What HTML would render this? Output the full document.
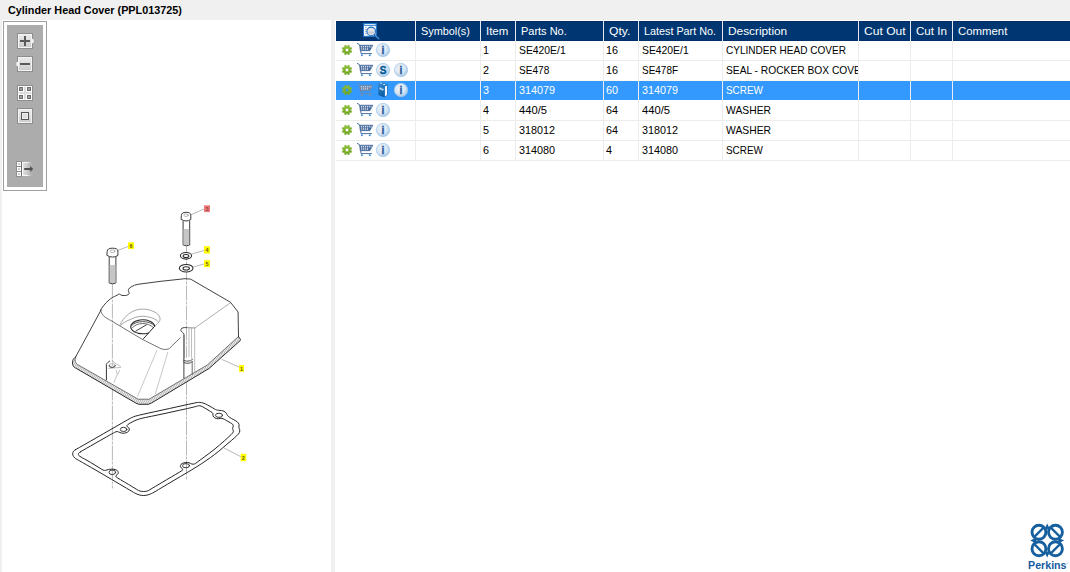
<!DOCTYPE html>
<html>
<head>
<meta charset="utf-8">
<title>Cylinder Head Cover (PPL013725)</title>
<style>
html,body{margin:0;padding:0;}
body{width:1070px;height:572px;overflow:hidden;background:#f0f0f0;position:relative;font-family:"Liberation Sans",sans-serif;}
.abs{position:absolute;}
#title{left:7.8px;top:2px;height:16px;line-height:16px;font-size:11.6px;font-weight:bold;color:#000;white-space:nowrap;transform:scaleX(0.934);transform-origin:0 50%;}
#left{left:2px;top:20px;width:329px;height:552px;background:#fff;}
#right{left:335px;top:20px;width:735px;height:552px;background:#fff;}
#tbar{left:1px;top:1px;width:42px;height:168px;border:1px solid #a0a0a0;background:#fff;}
#tbar .in{position:absolute;left:3px;top:3px;width:36px;height:162px;background:#acacac;}
/* table */
#hdr{left:0;top:1px;width:734px;height:20px;background:#003772;box-shadow:inset 0 1px 0 #002d66,inset 0 -1px 0 #00306a;}
.hc{position:absolute;top:0;height:20px;line-height:20px;font-size:11.5px;color:#fff;white-space:nowrap;}
.vs{position:absolute;top:0;width:1px;height:20px;background:#e4e8ef;}
.row{position:absolute;left:0;width:734px;height:19px;border-bottom:1px solid #ececec;font-size:11px;color:#000;}
.row.sel{background:#3399ff;color:#fff;border-bottom-color:#fff;}
.c{position:absolute;top:0;height:19px;line-height:18px;white-space:nowrap;overflow:hidden;}
.t{display:inline-block;transform-origin:0 50%;}
.ic{position:absolute;top:0;overflow:visible;}
.bv{position:absolute;top:21px;width:1px;height:120px;background:#ececec;}
</style>
</head>
<body>
<div id="title" class="abs">Cylinder Head Cover (PPL013725)</div>

<div id="left" class="abs">
<!--DIAGRAM-->
<svg class="abs" style="left:-2px;top:0" width="331" height="552" viewBox="0 20 331 552" fill="none" stroke-linecap="round" stroke-linejoin="round">
  <defs><pattern id="hatch" width="1.7" height="1.7" patternUnits="userSpaceOnUse" patternTransform="rotate(-28)"><rect width="1.7" height="1.7" fill="#f4f4f4"/><rect width="0.7" height="1.7" fill="#a6a6a6"/></pattern></defs>
  <!-- axis lines -->
  <g stroke="#9a9a9a" stroke-width="0.7" stroke-dasharray="14 2 2 2">
    <path d="M112.4,284 V365.5"/><path d="M112.4,386 V488"/>
    <path d="M186.5,246 V357.5"/><path d="M186.5,381 V481"/>
  </g>
  <!-- bolt 3 -->
  <g stroke="#333" stroke-width="0.95">
    <path d="M183.1,221 V245 Q186.4,246.6 189.7,245 V221" fill="#fff"/>
    <path d="M183.6,229 H189.2 V245 H183.6 Z" fill="#c6c6c6" stroke="none"/>
    <path d="M181.4,215 Q181.4,212.3 186.1,212.3 Q190.8,212.3 190.8,215 V219.5 Q186.1,222.6 181.4,219.5 Z" fill="#fff"/>
    <ellipse cx="186.1" cy="215.2" rx="2.2" ry="1.3" stroke="#888" stroke-width="0.6"/>
    <path d="M191.5,214.5 L204,209" stroke="#888" stroke-width="0.6"/>
  </g>
  <!-- bolt 6 -->
  <g stroke="#333" stroke-width="0.95">
    <path d="M109.2,257 V283 Q112.5,284.6 115.9,283 V257" fill="#fff"/>
    <path d="M109.7,265 H115.4 V283 H109.7 Z" fill="#c6c6c6" stroke="none"/>
    <path d="M107.2,251 Q107.2,248.2 112.5,248.2 Q117.9,248.2 117.9,251 V255.5 Q112.5,258.8 107.2,255.5 Z" fill="#fff"/>
    <ellipse cx="112.5" cy="251.2" rx="2.4" ry="1.4" stroke="#888" stroke-width="0.6"/>
    <path d="M118.5,250.2 L128,246.5" stroke="#888" stroke-width="0.6"/>
  </g>
  <!-- washers -->
  <g stroke="#2a2a2a" stroke-width="1.05" fill="#fff">
    <ellipse cx="186" cy="255.8" rx="5.6" ry="3.3"/>
    <ellipse cx="186" cy="256" rx="2.9" ry="1.5"/>
    <ellipse cx="186.2" cy="268.2" rx="6.8" ry="3.8"/>
    <ellipse cx="186.2" cy="268.4" rx="3.2" ry="1.6"/>
    <path d="M191.8,254 L204,250.5 M193.3,267 L204,264" stroke="#888" stroke-width="0.6" fill="none"/>
  </g>
  <!-- labels -->
  <g stroke="none">
    <rect x="204" y="205.3" width="6" height="6.8" fill="#f07878"/>
    <rect x="204" y="246.2" width="6" height="7.4" fill="#ffff00"/>
    <rect x="204" y="260.2" width="6" height="7" fill="#ffff00"/>
    <rect x="128" y="242.3" width="6" height="6.8" fill="#ffff00"/>
    <rect x="239" y="365" width="5" height="6.8" fill="#ffff00"/>
    <rect x="240.6" y="453.8" width="5.6" height="7.4" fill="#ffff00"/>
  </g>
  <g font-family="Liberation Sans, sans-serif" font-weight="bold" font-size="5.5" fill="#6b5a1e" stroke="none" text-anchor="middle">
    <text x="207" y="210.7" fill="#8a4a4a">3</text>
    <text x="207" y="252">4</text>
    <text x="207" y="265.8">5</text>
    <text x="131" y="247.8">6</text>
    <text x="241.5" y="370.5">1</text>
    <text x="243.4" y="459.6">2</text>
  </g>
  <!-- COVER -->
  <g stroke="#2c2c2c" stroke-width="0.9">
    <!-- flange -->
    <path d="M75.6,357 C72.5,359 71.8,362 73,365.5 C74,367.6 75.5,368 76.8,368.7 L135.7,403 L138.9,404.3 H148.3 L151.5,403 L209,368.5 L240.3,340.5 C240.8,339.3 240.2,338.4 239.3,338 L238.5,336.5 L207.3,365 L149.1,399.2 H138.1 L134.2,396.9 L78.2,364.9 C75.5,363.5 74.3,361 75.6,357 Z" fill="url(#hatch)" stroke="none"/>
    <path d="M238.5,336.5 L207.3,365 L149.1,399.2 H138.1 L134.2,396.9 L78.2,364.9 C75.5,363.5 74.3,361 75.6,357" stroke="#4a4a4a" stroke-width="0.75"/>
    <path d="M75.6,357 C72.5,359 71.8,362 73,365.5 C74,367.6 75.5,368 76.8,368.7 L135.7,403 L138.9,404.3 H148.3 L151.5,403 L209,368.5 L240.3,340.5 C240.8,339.3 240.2,338.4 239.3,338 L238.5,336.5" stroke-width="1"/>
    <!-- silhouette -->
    <path d="M75.6,357 L100.4,311.2 C101.5,307.6 105,303.5 109,300 C111.2,298 114,296.6 116,295.8 C117.5,295 118.5,294 119.5,294.1 C120.6,294.3 121,295.3 122,295.5 L125.7,295.5 C127.6,295 129.6,294.2 129.2,293 C128.8,291.6 128,290.6 128.5,289.5 C129,288.3 130,287.5 131,287 C133,285.6 135.5,284.7 138,284.3 L160,281.4 L185,278.7 L190.6,279.1 L230.4,302.2 L238.1,312 L238.5,336.5"/>
    <!-- top face front edge -->
    <path d="M100.6,309.5 C100.8,312 101.8,314 103.5,315.8 C105.5,317.8 108,319 110.4,320.3 L142.6,339.5 L158,347.2 C160,348.4 162,349.3 164,349.4 C166.5,349.4 168,349.3 169.2,348.6 L180.4,337.7" stroke="#3a3a3a" stroke-width="0.7"/>
    <!-- right boss notch -->
    <path d="M186.5,327.6 L184.6,327.6 C182.5,327.6 180.6,328.6 180.8,330.2 C181,332 183.9,332.5 183.9,334.5 V378" stroke-width="0.9"/>
    <path d="M186.5,327.6 L194.8,328" stroke="#666" stroke-width="0.7"/>
    <path d="M230.4,302.8 L194.8,328" stroke="#777" stroke-width="0.6"/>
    <!-- hole -->
    <path d="M154.7,326.2 L143.3,338.9" stroke-width="1"/>
    <path d="M154.7,326.2 A12,7 0 1 0 148.6,332.9" stroke-width="1.1"/>
    <path d="M131.6,325.6 C134,323 138,321.6 142.6,321.6 C147.5,321.6 151.8,323 154.2,325.4" stroke-width="0.8"/>
    <path d="M132.4,327.6 C135,325 138.5,323.5 142.6,323.5 C147,323.5 150.8,325 153.4,327.6" stroke-width="0.7"/>
    <path d="M135.8,331.1 L146.4,324.8" stroke-width="0.9"/>
  </g>
  <g stroke="#777" stroke-width="0.65">
    <!-- recess arcs -->
    <path d="M120.1,324.6 C122,320.6 124.8,317 128.4,314.2 C131.4,311.8 134.8,310.1 138.6,309.4 C141.2,309 143.8,309 146.4,309.3 C149.4,309.7 152,310.6 154.3,311.8 C157,313.2 159.2,315 159.8,317.3 C160.2,318.5 160.2,319.4 159.8,320.4 C159,322.4 157.2,324.2 155.1,325.9"/>
    <path d="M120.6,325.3 C123.6,322.6 126.8,320.8 130.7,319.3 C133.2,318.3 135.8,317 138.6,316.5 C141.2,316.2 143.8,316.2 146.4,316.5 C149.2,316.9 151.9,317.7 154.3,318.9 C156,319.7 157.3,320.6 158.2,321.6"/>
    <!-- front face light lines -->
    <path d="M156.8,350.6 L137.6,396.2" stroke="#a8a8a8"/>
    <path d="M167.8,352.4 L155.4,393.6" stroke="#a8a8a8"/>
    <!-- left boss -->
    <path d="M112.8,361.7 L120.3,366.2 M120.6,367.4 L108.7,368.4" stroke="#9a9a9a"/>
    <path d="M119.7,370.2 L117.5,375 M116.2,370.2 L117.2,374 M116.9,375.3 L114,382.5" stroke="#a6a6a6"/>
    <!-- right boss light lines -->
    <path d="M189,328 V356.5 M191.5,328.2 V356 C191.6,357.6 192,358.4 192.2,359.4 M194.7,328.2 V372.3" stroke="#999"/>
  </g>
  <g stroke="#2c2c2c" stroke-width="0.8">
    <path d="M106.4,379.8 V364.4 C107,363 108.4,362 109.7,361.1" stroke-width="0.95"/>
    <ellipse cx="112.2" cy="365.5" rx="3.1" ry="1.9" stroke="#8a8a8a" stroke-width="0.6"/>
    <path d="M109.1,365.5 A3.1,1.9 0 0 0 115.3,365.5" stroke="#333" stroke-width="0.9"/>
    <path d="M184.3,335 V357.8" stroke="#555" stroke-width="0.5"/>
    <path d="M183.6,360.2 C185,361.6 191,361.6 192.2,359.6 M183.6,362.2 C185,363.8 191,363.8 192.2,361.6" stroke="#333" stroke-width="0.9"/>
    <path d="M192.2,361.6 V374.2" stroke="#444" stroke-width="0.8"/>
    <path d="M222,359.5 L238.8,367" stroke="#888" stroke-width="0.6"/>
  </g>
  <!-- GASKET -->
  <g stroke="#262626" stroke-width="1">
    <path d="M75.3,449.8 Q76.2,449.3 90.1,441.4 Q104.0,433.4 117.0,425.9 Q130.0,418.4 131.7,417.6 Q133.4,416.8 135.2,416.2 Q137.0,415.7 138.3,415.4 Q139.7,415.0 154.8,411.7 Q170.0,408.4 183.0,405.5 Q196.0,402.7 197.2,402.5 Q198.5,402.3 199.9,402.4 Q201.3,402.5 203.2,403.1 Q205.2,403.6 207.6,405.0 Q210.0,406.3 212.2,407.6 Q214.5,409.0 215.3,409.4 Q216.2,409.9 217.4,410.1 Q218.6,410.3 220.1,410.4 Q221.5,410.4 222.8,410.8 Q224.1,411.1 225.2,412.1 Q226.4,413.1 227.0,414.5 Q227.6,415.8 228.6,416.6 Q229.6,417.4 231.3,418.4 Q233.0,419.3 235.2,420.5 Q237.5,421.7 238.4,423.1 Q239.4,424.5 239.0,425.9 Q238.6,427.2 239.2,428.4 Q239.8,429.6 239.8,431.0 Q239.8,432.3 238.4,434.0 Q237.0,435.6 234.5,437.8 Q232.0,440.0 227.0,444.2 Q222.0,448.5 218.4,451.5 Q214.8,454.5 210.4,457.6 Q206.0,460.7 201.8,463.5 Q197.5,466.3 191.8,469.8 Q186.0,473.2 180.8,476.3 Q175.5,479.4 167.8,484.0 Q160.0,488.6 156.8,490.6 Q153.5,492.5 152.5,493.1 Q151.5,493.6 149.9,494.2 Q148.3,494.9 145.9,495.3 Q143.6,495.7 141.8,495.4 Q139.9,495.2 137.8,494.4 Q135.7,493.6 134.3,492.8 Q133.0,492.0 126.7,488.3 Q120.4,484.6 111.6,479.4 Q102.8,474.2 91.4,467.6 Q80.0,461.1 78.2,460.1 Q76.5,459.1 75.7,458.6 Q74.8,458.1 73.7,456.7 Q72.6,455.3 72.7,453.8 Q72.7,452.2 73.6,451.2 Q74.5,450.3 75.3,449.8Z"/>
    <path d="M80.3,451.9 Q81.1,451.4 90.5,446.0 Q100.0,440.6 106.5,436.9 Q113.0,433.2 114.5,432.4 Q116.0,431.5 117.3,431.6 Q118.6,431.8 119.9,432.5 Q121.2,433.1 122.8,433.2 Q124.4,433.4 126.2,432.7 Q128.0,432.0 128.8,431.0 Q129.6,430.0 129.3,428.9 Q129.1,427.9 127.8,427.1 Q126.5,426.3 127.0,425.5 Q127.5,424.7 129.2,423.6 Q131.0,422.6 132.9,421.6 Q134.9,420.5 137.2,419.7 Q139.5,418.9 142.2,418.2 Q144.8,417.6 151.3,416.3 Q157.8,415.0 168.9,412.6 Q180.0,410.1 187.5,408.5 Q195.0,406.8 196.2,406.4 Q197.5,406.0 198.6,405.8 Q199.7,405.6 200.9,406.0 Q202.1,406.4 204.6,407.9 Q207.0,409.3 209.0,410.6 Q211.0,411.8 212.1,412.5 Q213.1,413.1 212.9,414.5 Q212.7,415.8 213.7,417.0 Q214.7,418.2 216.6,418.6 Q218.6,419.0 220.1,418.4 Q221.7,417.8 224.3,419.3 Q227.0,420.8 229.0,422.0 Q231.0,423.1 231.8,423.6 Q232.7,424.1 233.1,425.1 Q233.5,426.1 232.9,427.2 Q232.3,428.4 232.9,429.6 Q233.5,430.8 233.3,431.8 Q233.1,432.7 231.1,434.6 Q229.0,436.6 227.2,438.3 Q225.3,440.0 219.6,445.0 Q213.8,450.0 208.9,453.6 Q204.0,457.2 200.2,460.0 Q196.5,462.8 195.4,463.5 Q194.4,464.2 193.1,464.2 Q191.8,464.2 190.4,463.4 Q189.1,462.6 187.6,462.5 Q186.0,462.3 183.9,462.9 Q181.8,463.4 181.0,464.4 Q180.2,465.5 180.4,466.6 Q180.7,467.6 181.9,468.4 Q183.1,469.2 182.9,469.7 Q182.8,470.2 179.4,472.2 Q176.0,474.2 171.6,476.8 Q167.1,479.4 161.1,483.0 Q155.0,486.6 152.2,488.3 Q149.5,490.0 148.4,490.6 Q147.3,491.2 145.4,491.4 Q143.6,491.6 141.8,491.4 Q139.9,491.2 138.4,490.4 Q137.0,489.6 132.9,487.1 Q128.8,484.6 124.4,482.0 Q120.0,479.4 117.8,478.1 Q115.7,476.8 115.7,476.2 Q115.7,475.7 117.0,474.8 Q118.3,473.9 118.3,472.6 Q118.3,471.3 116.8,470.2 Q115.2,469.2 113.1,469.2 Q111.0,469.2 109.7,469.3 Q108.4,469.4 107.1,469.9 Q105.7,470.5 104.4,470.4 Q103.1,470.2 101.5,469.2 Q100.0,468.2 95.0,465.1 Q90.0,462.1 87.0,460.4 Q84.0,458.7 82.5,457.9 Q81.1,457.0 79.8,456.3 Q78.6,455.6 78.4,454.6 Q78.3,453.5 78.9,452.9 Q79.5,452.3 80.3,451.9Z"/>
    <ellipse cx="123.6" cy="429.4" rx="3.3" ry="2.1" stroke-width="0.9"/>
    <ellipse cx="112.3" cy="472.3" rx="3.3" ry="2.3" stroke-width="0.9"/>
    <ellipse cx="219" cy="415.3" rx="3.5" ry="2.1" stroke-width="0.9"/>
    <ellipse cx="186" cy="465.7" rx="3.5" ry="2.1" stroke-width="0.9"/>
    <path d="M224,447.9 L240.4,456.5" stroke="#888" stroke-width="0.6"/>
  </g>
</svg>
<!--/DIAGRAM-->
  <div id="tbar" class="abs"><div class="in"></div>
<!--TB-->
<svg class="abs" style="left:3px;top:3px" width="36" height="162" viewBox="7 25 36 162">
  <defs>
    <linearGradient id="bg1" x1="0" y1="0" x2="0" y2="1"><stop offset="0" stop-color="#e9e9e9"/><stop offset="0.5" stop-color="#dcdcdc"/><stop offset="1" stop-color="#cdcdcd"/></linearGradient>
    <linearGradient id="bg2" x1="0" y1="0" x2="1" y2="0"><stop offset="0" stop-color="#e6e6e6"/><stop offset="0.45" stop-color="#c9c9c9"/><stop offset="1" stop-color="#acacac" stop-opacity="0"/></linearGradient>
    <linearGradient id="bg3" x1="0" y1="0" x2="1" y2="0"><stop offset="0" stop-color="#ffffff"/><stop offset="0.5" stop-color="#f4f4f4"/><stop offset="1" stop-color="#acacac" stop-opacity="0"/></linearGradient>
  </defs>
  <!-- plus -->
  <path d="M33,38.2 L35.2,41 L33,43.8 Z" fill="#f4f4f4" stroke="#8c8c8c" stroke-width="0.8"/>
  <rect x="17.5" y="33.5" width="15" height="15" fill="#f3f3f3" stroke="#8d8d8d" stroke-width="1"/>
  <rect x="19" y="35" width="12" height="12" fill="url(#bg1)"/>
  <rect x="32" y="38.8" width="1.4" height="4.4" fill="#f4f4f4"/>
  <rect x="20" y="40" width="10" height="2" fill="#5a5a5a"/><rect x="24" y="36" width="2" height="10" fill="#5a5a5a"/>
  <!-- minus -->
  <path d="M17,61.2 L14.8,64 L17,66.8 Z" fill="#f4f4f4" stroke="#8c8c8c" stroke-width="0.8"/>
  <rect x="17.5" y="56.5" width="15" height="15" fill="#f3f3f3" stroke="#8d8d8d" stroke-width="1"/>
  <rect x="19" y="58" width="12" height="12" fill="url(#bg1)"/>
  <rect x="16.6" y="61.8" width="1.4" height="4.4" fill="#f4f4f4"/>
  <rect x="20" y="63" width="10" height="2" fill="#5a5a5a"/>
  <!-- grid -->
  <rect x="17.5" y="85.5" width="15" height="15" fill="#f3f3f3" stroke="#8d8d8d" stroke-width="1"/>
  <rect x="19" y="87" width="12" height="12" fill="#dcdcdc"/>
  <g fill="#a0a0a0" stroke="#6e6e6e" stroke-width="1">
    <rect x="19.5" y="87.5" width="3" height="3"/><rect x="27.5" y="87.5" width="3" height="3"/>
    <rect x="19.5" y="95.5" width="3" height="3"/><rect x="27.5" y="95.5" width="3" height="3"/>
  </g>
  <g fill="none" stroke="#fff" stroke-width="1">
    <rect x="18.5" y="86.5" width="5" height="5"/><rect x="26.5" y="86.5" width="5" height="5"/>
    <rect x="18.5" y="94.5" width="5" height="5"/><rect x="26.5" y="94.5" width="5" height="5"/>
  </g>
  <!-- square -->
  <rect x="17.5" y="108.5" width="15" height="15" fill="#f3f3f3" stroke="#8d8d8d" stroke-width="1"/>
  <rect x="19" y="110" width="12" height="12" fill="url(#bg1)"/>
  <rect x="21.5" y="112.5" width="7" height="7" fill="#dedede" stroke="#555" stroke-width="1"/>
  <rect x="22.5" y="113.5" width="5" height="5" fill="none" stroke="#ececec" stroke-width="1"/>
  <!-- export -->
  <rect x="22" y="162" width="12" height="14" fill="url(#bg2)"/>
  <rect x="22" y="162" width="11" height="1" fill="url(#bg3)"/><rect x="22" y="175" width="11" height="1" fill="url(#bg3)"/>
  <rect x="22" y="162" width="1" height="14" fill="#fff"/>
  <rect x="16.5" y="161.5" width="5" height="15" fill="#fff" stroke="#8f8f8f" stroke-width="1"/>
  <rect x="21" y="162" width="1" height="14" fill="#6c6c6c"/>
  <rect x="17" y="166" width="4" height="1" fill="#8a8a8a"/><rect x="17" y="171" width="4" height="1" fill="#8a8a8a"/>
  <rect x="18" y="163" width="2" height="2" fill="#cfcfcf"/><rect x="18" y="168" width="2" height="2" fill="#cfcfcf"/><rect x="18" y="173" width="2" height="2" fill="#cfcfcf"/>
  <path d="M24.2,168 H30.2 V166 L33.2,169 L30.2,172 V170 H24.2 Z" fill="#505050"/>
</svg>
<!--/TB-->
</div>
</div>

<div id="right" class="abs">
<div id="tbl" class="abs" style="left:1px;top:0;width:734px;height:552px">
  <div id="hdr" class="abs">
<!--HI--><svg class="ic" style="left:0" width="79" height="20" viewBox="336 21 79 20">
  <rect x="363.5" y="23.7" width="12.8" height="12.6" fill="#fdfdfe" stroke="#1d74cc" stroke-width="1"/>
  <rect x="363" y="23.2" width="13.8" height="2.6" fill="#1d74cc"/>
  <rect x="364.4" y="24" width="11.2" height="0.9" fill="#e8f1fb"/>
  <path d="M365.4,27.6 h1 M365.4,29.6 h1 M365.4,31.6 h1 M365.4,33.6 h1" stroke="#1d4f94" stroke-width="0.8"/>
  <path d="M374.6,34.9 L378.7,38.7" stroke="#1c5fae" stroke-width="2.1" stroke-linecap="round"/>
  <path d="M375.2,35.3 L378.5,38.4" stroke="#7fb1e6" stroke-width="0.7" stroke-linecap="round" stroke-dasharray="0.7 0.7"/>
  <circle cx="371.2" cy="31.4" r="4.3" fill="#d6dade" stroke="#1f6fc4" stroke-width="1.1"/>
  <path d="M368.4,30.3 Q371.2,28.2 374,30.3" stroke="#f4f6f8" stroke-width="1" fill="none"/>
  <path d="M368.2,32.6 H374.2" stroke="#c3c8ce" stroke-width="0.9"/>
</svg>
<!--/HI-->
    <div class="hc" style="left:84.6px"><span class="t" style="transform:scaleX(0.944)">Symbol(s)</span></div>
    <div class="hc" style="left:149.8px"><span class="t" style="transform:scaleX(0.997)">Item</span></div>
    <div class="hc" style="left:185.4px"><span class="t" style="transform:scaleX(0.954)">Parts No.</span></div>
    <div class="hc" style="left:273.1px"><span class="t" style="transform:scaleX(1.053)">Qty.</span></div>
    <div class="hc" style="left:308.2px"><span class="t" style="transform:scaleX(0.938)">Latest Part No.</span></div>
    <div class="hc" style="left:391.9px"><span class="t" style="transform:scaleX(1.029)">Description</span></div>
    <div class="hc" style="left:528.0px"><span class="t" style="transform:scaleX(1.050)">Cut Out</span></div>
    <div class="hc" style="left:580.1px"><span class="t" style="transform:scaleX(1.007)">Cut In</span></div>
    <div class="hc" style="left:622.2px"><span class="t" style="transform:scaleX(0.989)">Comment</span></div>
    <div class="vs" style="left:79px"></div><div class="vs" style="left:144px"></div><div class="vs" style="left:179px"></div>
    <div class="vs" style="left:267px"></div><div class="vs" style="left:302px"></div><div class="vs" style="left:386px"></div>
    <div class="vs" style="left:522px"></div><div class="vs" style="left:574px"></div><div class="vs" style="left:616px"></div>
  </div>
  <div class="row" style="top:21px"><!--ICONS1--><svg class="ic" style="left:0" width="79" height="19" viewBox="0 0 79 19"><defs>
<linearGradient id="gg1" x1="0" y1="0" x2="0" y2="1"><stop offset="0" stop-color="#8ec13c"/><stop offset="1" stop-color="#6b9f1f"/></linearGradient>
<radialGradient id="ib1" cx="0.42" cy="0.4" r="0.62"><stop offset="0" stop-color="#eef4fa"/><stop offset="0.6" stop-color="#d9e7f4"/><stop offset="1" stop-color="#9fc4e4"/></radialGradient>
</defs><path d="M11.59,5.30 L12.12,4.13 L13.65,4.76 L13.20,5.97 L14.03,6.80 L15.24,6.35 L15.87,7.88 L14.70,8.41 L14.70,9.59 L15.87,10.12 L15.24,11.65 L14.03,11.20 L13.20,12.03 L13.65,13.24 L12.12,13.87 L11.59,12.70 L10.41,12.70 L9.88,13.87 L8.35,13.24 L8.80,12.03 L7.97,11.20 L6.76,11.65 L6.13,10.12 L7.30,9.59 L7.30,8.41 L6.13,7.88 L6.76,6.35 L7.97,6.80 L8.80,5.97 L8.35,4.76 L9.88,4.13 L10.41,5.30Z M9.25,9.00 a1.75,1.75 0 1,0 3.50,0 a1.75,1.75 0 1,0 -3.50,0Z" fill="url(#gg1)" fill-rule="evenodd" stroke="#7db02e" stroke-width="0.5" stroke-linejoin="round"/><g fill="none" stroke="#44699b" stroke-linecap="round" stroke-linejoin="round"><path d="M21.3,2.5 L22.6,2.9 L24.3,5.2 L25.0,12.6 H35.6" stroke-width="0.95"/><path d="M23.8,4.2 H36.9 L33.9,9.7 H24.6 Z" fill="#44699b" stroke-width="0.6"/></g><g fill="#ffffff"><rect x="25.15" y="5.20" width="1.1" height="1.15"/><rect x="25.25" y="7.35" width="1.1" height="1.25"/><rect x="27.05" y="5.20" width="1.1" height="1.15"/><rect x="27.15" y="7.35" width="1.1" height="1.25"/><rect x="28.95" y="5.20" width="1.1" height="1.15"/><rect x="29.05" y="7.35" width="1.1" height="1.25"/><rect x="30.85" y="5.20" width="1.1" height="1.15"/><rect x="30.95" y="7.35" width="1.1" height="1.25"/><rect x="32.75" y="5.20" width="1.1" height="1.15"/><rect x="24.90" y="5.30" width="0.5" height="1.2"/><rect x="34.60" y="5.30" width="0.9" height="1.1"/></g><circle cx="25.9" cy="14.3" r="1.0" fill="#3b90e3"/><circle cx="33.8" cy="14.3" r="1.0" fill="#3b90e3"/><circle cx="47" cy="9" r="6.7" fill="url(#ib1)" stroke="#a9c9e6" stroke-width="0.7"/><text x="47" y="12.8" text-anchor="middle" font-family="Liberation Sans, sans-serif" font-weight="bold" font-size="10.2" fill="#2e5c9f" stroke="#2e5c9f" stroke-width="0.45">i</text></svg><!--/ICONS1--><div class="c" style="left:147.0px"><span class="t" style="transform:scaleX(0.98)">1</span></div><div class="c" style="left:183.0px"><span class="t" style="transform:scaleX(0.942)">SE420E/1</span></div><div class="c" style="left:270.3px"><span class="t" style="transform:scaleX(0.98)">16</span></div><div class="c" style="left:306.0px"><span class="t" style="transform:scaleX(0.942)">SE420E/1</span></div><div class="c" style="left:390.3px;width:131.5px"><span class="t" style="transform:scaleX(0.913)">CYLINDER HEAD COVER</span></div></div>
  <div class="row" style="top:41px;border-bottom-color:#fbf8f0"><!--ICONS2--><svg class="ic" style="left:0" width="79" height="19" viewBox="0 0 79 19"><defs>
<linearGradient id="gg2" x1="0" y1="0" x2="0" y2="1"><stop offset="0" stop-color="#8ec13c"/><stop offset="1" stop-color="#6b9f1f"/></linearGradient>
<radialGradient id="ib2" cx="0.42" cy="0.4" r="0.62"><stop offset="0" stop-color="#eef4fa"/><stop offset="0.6" stop-color="#d9e7f4"/><stop offset="1" stop-color="#9fc4e4"/></radialGradient>
</defs><path d="M11.59,5.30 L12.12,4.13 L13.65,4.76 L13.20,5.97 L14.03,6.80 L15.24,6.35 L15.87,7.88 L14.70,8.41 L14.70,9.59 L15.87,10.12 L15.24,11.65 L14.03,11.20 L13.20,12.03 L13.65,13.24 L12.12,13.87 L11.59,12.70 L10.41,12.70 L9.88,13.87 L8.35,13.24 L8.80,12.03 L7.97,11.20 L6.76,11.65 L6.13,10.12 L7.30,9.59 L7.30,8.41 L6.13,7.88 L6.76,6.35 L7.97,6.80 L8.80,5.97 L8.35,4.76 L9.88,4.13 L10.41,5.30Z M9.25,9.00 a1.75,1.75 0 1,0 3.50,0 a1.75,1.75 0 1,0 -3.50,0Z" fill="url(#gg2)" fill-rule="evenodd" stroke="#7db02e" stroke-width="0.5" stroke-linejoin="round"/><g fill="none" stroke="#44699b" stroke-linecap="round" stroke-linejoin="round"><path d="M21.3,2.5 L22.6,2.9 L24.3,5.2 L25.0,12.6 H35.6" stroke-width="0.95"/><path d="M23.8,4.2 H36.9 L33.9,9.7 H24.6 Z" fill="#44699b" stroke-width="0.6"/></g><g fill="#ffffff"><rect x="25.15" y="5.20" width="1.1" height="1.15"/><rect x="25.25" y="7.35" width="1.1" height="1.25"/><rect x="27.05" y="5.20" width="1.1" height="1.15"/><rect x="27.15" y="7.35" width="1.1" height="1.25"/><rect x="28.95" y="5.20" width="1.1" height="1.15"/><rect x="29.05" y="7.35" width="1.1" height="1.25"/><rect x="30.85" y="5.20" width="1.1" height="1.15"/><rect x="30.95" y="7.35" width="1.1" height="1.25"/><rect x="32.75" y="5.20" width="1.1" height="1.15"/><rect x="24.90" y="5.30" width="0.5" height="1.2"/><rect x="34.60" y="5.30" width="0.9" height="1.1"/></g><circle cx="25.9" cy="14.3" r="1.0" fill="#3b90e3"/><circle cx="33.8" cy="14.3" r="1.0" fill="#3b90e3"/><circle cx="47" cy="9" r="6.7" fill="url(#ib2)" stroke="#a9c9e6" stroke-width="0.7"/><text x="47" y="12.6" text-anchor="middle" font-family="Liberation Sans, sans-serif" font-weight="bold" font-size="10" fill="#0b5b98" stroke="#0b5b98" stroke-width="0.45">S</text><circle cx="65" cy="9" r="6.7" fill="url(#ib2)" stroke="#a9c9e6" stroke-width="0.7"/><text x="65" y="12.8" text-anchor="middle" font-family="Liberation Sans, sans-serif" font-weight="bold" font-size="10.2" fill="#2e5c9f" stroke="#2e5c9f" stroke-width="0.45">i</text></svg><!--/ICONS2--><div class="c" style="left:147.0px"><span class="t" style="transform:scaleX(0.98)">2</span></div><div class="c" style="left:183.0px"><span class="t" style="transform:scaleX(0.917)">SE478</span></div><div class="c" style="left:270.3px"><span class="t" style="transform:scaleX(0.98)">16</span></div><div class="c" style="left:306.0px"><span class="t" style="transform:scaleX(0.906)">SE478F</span></div><div class="c" style="left:390.3px;width:131.5px"><span class="t" style="transform:scaleX(0.93)">SEAL - ROCKER BOX COVER</span></div></div>
  <div class="row sel" style="top:61px"><!--ICONS3--><svg class="ic" style="left:0" width="79" height="19" viewBox="0 0 79 19"><defs>
<linearGradient id="gg3" x1="0" y1="0" x2="0" y2="1"><stop offset="0" stop-color="#8ec13c"/><stop offset="1" stop-color="#6b9f1f"/></linearGradient>
<radialGradient id="ib3" cx="0.42" cy="0.4" r="0.62"><stop offset="0" stop-color="#eef4fa"/><stop offset="0.6" stop-color="#d9e7f4"/><stop offset="1" stop-color="#9fc4e4"/></radialGradient>
<linearGradient id="bk" x1="0" y1="0" x2="0.3" y2="1"><stop offset="0" stop-color="#3a8bd0"/><stop offset="0.5" stop-color="#1e72b8"/><stop offset="1" stop-color="#0c5fa3"/></linearGradient></defs><path d="M11.59,5.30 L12.12,4.13 L13.65,4.76 L13.20,5.97 L14.03,6.80 L15.24,6.35 L15.87,7.88 L14.70,8.41 L14.70,9.59 L15.87,10.12 L15.24,11.65 L14.03,11.20 L13.20,12.03 L13.65,13.24 L12.12,13.87 L11.59,12.70 L10.41,12.70 L9.88,13.87 L8.35,13.24 L8.80,12.03 L7.97,11.20 L6.76,11.65 L6.13,10.12 L7.30,9.59 L7.30,8.41 L6.13,7.88 L6.76,6.35 L7.97,6.80 L8.80,5.97 L8.35,4.76 L9.88,4.13 L10.41,5.30Z M9.25,9.00 a1.75,1.75 0 1,0 3.50,0 a1.75,1.75 0 1,0 -3.50,0Z" fill="url(#gg3)" fill-rule="evenodd" stroke="#7db02e" stroke-width="0.5" stroke-linejoin="round"/><g fill="none" stroke="#6f87a8" stroke-linecap="round" stroke-linejoin="round"><path d="M21.3,2.5 L22.6,2.9 L24.3,5.2 L25.0,12.6 H35.6" stroke-width="0.95"/><path d="M23.8,4.2 H36.9 L33.9,9.7 H24.6 Z" fill="#6f87a8" stroke-width="0.6"/></g><g fill="#cfe0f3"><rect x="25.15" y="5.20" width="1.1" height="1.15"/><rect x="25.25" y="7.35" width="1.1" height="1.25"/><rect x="27.05" y="5.20" width="1.1" height="1.15"/><rect x="27.15" y="7.35" width="1.1" height="1.25"/><rect x="28.95" y="5.20" width="1.1" height="1.15"/><rect x="29.05" y="7.35" width="1.1" height="1.25"/><rect x="30.85" y="5.20" width="1.1" height="1.15"/><rect x="30.95" y="7.35" width="1.1" height="1.25"/><rect x="32.75" y="5.20" width="1.1" height="1.15"/><rect x="24.90" y="5.30" width="0.5" height="1.2"/><rect x="34.60" y="5.30" width="0.9" height="1.1"/></g><circle cx="25.9" cy="14.3" r="1.0" fill="#8091a8"/><circle cx="33.8" cy="14.3" r="1.0" fill="#8091a8"/><polygon points="45.3,1.0 51.9,3.7 51.9,13.8 48.7,16.6 48.7,5.2" fill="#1a6cb0"/><polygon points="48.9,5.4 51.1,4.3 51.1,13.9 48.9,15.5" fill="#f4f8fc"/><polygon points="42.2,2.2 45.3,1.0 51.9,3.7 48.7,5.2" fill="#1f78c4"/><polygon points="43.6,2.0 45.2,1.4 46.8,2.1 45.2,2.8" fill="#eef5fb"/><polygon points="46.6,3.3 48.2,2.7 49.8,3.4 48.2,4.1" fill="#eef5fb"/><polygon points="42.2,2.2 48.7,5.2 48.7,16.6 42.2,14.0" fill="url(#bk)"/><ellipse cx="44.6" cy="7.6" rx="1.3" ry="1.1" fill="#cfe2f3" opacity="0.9"/><ellipse cx="46.5" cy="8.6" rx="1.3" ry="1.1" fill="#cfe2f3" opacity="0.85"/><circle cx="65" cy="9" r="6.7" fill="url(#ib3)" stroke="#a9c9e6" stroke-width="0.7"/><text x="65" y="12.8" text-anchor="middle" font-family="Liberation Sans, sans-serif" font-weight="bold" font-size="10.2" fill="#2e5c9f" stroke="#2e5c9f" stroke-width="0.45">i</text></svg><!--/ICONS3--><div class="c" style="left:147.0px"><span class="t" style="transform:scaleX(0.98)">3</span></div><div class="c" style="left:183.0px"><span class="t" style="transform:scaleX(0.98)">314079</span></div><div class="c" style="left:270.3px"><span class="t" style="transform:scaleX(0.98)">60</span></div><div class="c" style="left:306.0px"><span class="t" style="transform:scaleX(0.98)">314079</span></div><div class="c" style="left:390.3px;width:131.5px"><span class="t" style="transform:scaleX(0.9)">SCREW</span></div></div>
  <div class="row" style="top:81px"><!--ICONS4--><svg class="ic" style="left:0" width="79" height="19" viewBox="0 0 79 19"><defs>
<linearGradient id="gg4" x1="0" y1="0" x2="0" y2="1"><stop offset="0" stop-color="#8ec13c"/><stop offset="1" stop-color="#6b9f1f"/></linearGradient>
<radialGradient id="ib4" cx="0.42" cy="0.4" r="0.62"><stop offset="0" stop-color="#eef4fa"/><stop offset="0.6" stop-color="#d9e7f4"/><stop offset="1" stop-color="#9fc4e4"/></radialGradient>
</defs><path d="M11.59,5.30 L12.12,4.13 L13.65,4.76 L13.20,5.97 L14.03,6.80 L15.24,6.35 L15.87,7.88 L14.70,8.41 L14.70,9.59 L15.87,10.12 L15.24,11.65 L14.03,11.20 L13.20,12.03 L13.65,13.24 L12.12,13.87 L11.59,12.70 L10.41,12.70 L9.88,13.87 L8.35,13.24 L8.80,12.03 L7.97,11.20 L6.76,11.65 L6.13,10.12 L7.30,9.59 L7.30,8.41 L6.13,7.88 L6.76,6.35 L7.97,6.80 L8.80,5.97 L8.35,4.76 L9.88,4.13 L10.41,5.30Z M9.25,9.00 a1.75,1.75 0 1,0 3.50,0 a1.75,1.75 0 1,0 -3.50,0Z" fill="url(#gg4)" fill-rule="evenodd" stroke="#7db02e" stroke-width="0.5" stroke-linejoin="round"/><g fill="none" stroke="#44699b" stroke-linecap="round" stroke-linejoin="round"><path d="M21.3,2.5 L22.6,2.9 L24.3,5.2 L25.0,12.6 H35.6" stroke-width="0.95"/><path d="M23.8,4.2 H36.9 L33.9,9.7 H24.6 Z" fill="#44699b" stroke-width="0.6"/></g><g fill="#ffffff"><rect x="25.15" y="5.20" width="1.1" height="1.15"/><rect x="25.25" y="7.35" width="1.1" height="1.25"/><rect x="27.05" y="5.20" width="1.1" height="1.15"/><rect x="27.15" y="7.35" width="1.1" height="1.25"/><rect x="28.95" y="5.20" width="1.1" height="1.15"/><rect x="29.05" y="7.35" width="1.1" height="1.25"/><rect x="30.85" y="5.20" width="1.1" height="1.15"/><rect x="30.95" y="7.35" width="1.1" height="1.25"/><rect x="32.75" y="5.20" width="1.1" height="1.15"/><rect x="24.90" y="5.30" width="0.5" height="1.2"/><rect x="34.60" y="5.30" width="0.9" height="1.1"/></g><circle cx="25.9" cy="14.3" r="1.0" fill="#3b90e3"/><circle cx="33.8" cy="14.3" r="1.0" fill="#3b90e3"/><circle cx="47" cy="9" r="6.7" fill="url(#ib4)" stroke="#a9c9e6" stroke-width="0.7"/><text x="47" y="12.8" text-anchor="middle" font-family="Liberation Sans, sans-serif" font-weight="bold" font-size="10.2" fill="#2e5c9f" stroke="#2e5c9f" stroke-width="0.45">i</text></svg><!--/ICONS4--><div class="c" style="left:147.0px"><span class="t" style="transform:scaleX(0.98)">4</span></div><div class="c" style="left:183.0px"><span class="t" style="transform:scaleX(1.02)">440/5</span></div><div class="c" style="left:270.3px"><span class="t" style="transform:scaleX(0.98)">64</span></div><div class="c" style="left:306.0px"><span class="t" style="transform:scaleX(1.02)">440/5</span></div><div class="c" style="left:390.3px;width:131.5px"><span class="t" style="transform:scaleX(0.94)">WASHER</span></div></div>
  <div class="row" style="top:101px"><!--ICONS5--><svg class="ic" style="left:0" width="79" height="19" viewBox="0 0 79 19"><defs>
<linearGradient id="gg5" x1="0" y1="0" x2="0" y2="1"><stop offset="0" stop-color="#8ec13c"/><stop offset="1" stop-color="#6b9f1f"/></linearGradient>
<radialGradient id="ib5" cx="0.42" cy="0.4" r="0.62"><stop offset="0" stop-color="#eef4fa"/><stop offset="0.6" stop-color="#d9e7f4"/><stop offset="1" stop-color="#9fc4e4"/></radialGradient>
</defs><path d="M11.59,5.30 L12.12,4.13 L13.65,4.76 L13.20,5.97 L14.03,6.80 L15.24,6.35 L15.87,7.88 L14.70,8.41 L14.70,9.59 L15.87,10.12 L15.24,11.65 L14.03,11.20 L13.20,12.03 L13.65,13.24 L12.12,13.87 L11.59,12.70 L10.41,12.70 L9.88,13.87 L8.35,13.24 L8.80,12.03 L7.97,11.20 L6.76,11.65 L6.13,10.12 L7.30,9.59 L7.30,8.41 L6.13,7.88 L6.76,6.35 L7.97,6.80 L8.80,5.97 L8.35,4.76 L9.88,4.13 L10.41,5.30Z M9.25,9.00 a1.75,1.75 0 1,0 3.50,0 a1.75,1.75 0 1,0 -3.50,0Z" fill="url(#gg5)" fill-rule="evenodd" stroke="#7db02e" stroke-width="0.5" stroke-linejoin="round"/><g fill="none" stroke="#44699b" stroke-linecap="round" stroke-linejoin="round"><path d="M21.3,2.5 L22.6,2.9 L24.3,5.2 L25.0,12.6 H35.6" stroke-width="0.95"/><path d="M23.8,4.2 H36.9 L33.9,9.7 H24.6 Z" fill="#44699b" stroke-width="0.6"/></g><g fill="#ffffff"><rect x="25.15" y="5.20" width="1.1" height="1.15"/><rect x="25.25" y="7.35" width="1.1" height="1.25"/><rect x="27.05" y="5.20" width="1.1" height="1.15"/><rect x="27.15" y="7.35" width="1.1" height="1.25"/><rect x="28.95" y="5.20" width="1.1" height="1.15"/><rect x="29.05" y="7.35" width="1.1" height="1.25"/><rect x="30.85" y="5.20" width="1.1" height="1.15"/><rect x="30.95" y="7.35" width="1.1" height="1.25"/><rect x="32.75" y="5.20" width="1.1" height="1.15"/><rect x="24.90" y="5.30" width="0.5" height="1.2"/><rect x="34.60" y="5.30" width="0.9" height="1.1"/></g><circle cx="25.9" cy="14.3" r="1.0" fill="#3b90e3"/><circle cx="33.8" cy="14.3" r="1.0" fill="#3b90e3"/><circle cx="47" cy="9" r="6.7" fill="url(#ib5)" stroke="#a9c9e6" stroke-width="0.7"/><text x="47" y="12.8" text-anchor="middle" font-family="Liberation Sans, sans-serif" font-weight="bold" font-size="10.2" fill="#2e5c9f" stroke="#2e5c9f" stroke-width="0.45">i</text></svg><!--/ICONS5--><div class="c" style="left:147.0px"><span class="t" style="transform:scaleX(0.98)">5</span></div><div class="c" style="left:183.0px"><span class="t" style="transform:scaleX(0.98)">318012</span></div><div class="c" style="left:270.3px"><span class="t" style="transform:scaleX(0.98)">64</span></div><div class="c" style="left:306.0px"><span class="t" style="transform:scaleX(0.98)">318012</span></div><div class="c" style="left:390.3px;width:131.5px"><span class="t" style="transform:scaleX(0.94)">WASHER</span></div></div>
  <div class="row" style="top:121px"><!--ICONS6--><svg class="ic" style="left:0" width="79" height="19" viewBox="0 0 79 19"><defs>
<linearGradient id="gg6" x1="0" y1="0" x2="0" y2="1"><stop offset="0" stop-color="#8ec13c"/><stop offset="1" stop-color="#6b9f1f"/></linearGradient>
<radialGradient id="ib6" cx="0.42" cy="0.4" r="0.62"><stop offset="0" stop-color="#eef4fa"/><stop offset="0.6" stop-color="#d9e7f4"/><stop offset="1" stop-color="#9fc4e4"/></radialGradient>
</defs><path d="M11.59,5.30 L12.12,4.13 L13.65,4.76 L13.20,5.97 L14.03,6.80 L15.24,6.35 L15.87,7.88 L14.70,8.41 L14.70,9.59 L15.87,10.12 L15.24,11.65 L14.03,11.20 L13.20,12.03 L13.65,13.24 L12.12,13.87 L11.59,12.70 L10.41,12.70 L9.88,13.87 L8.35,13.24 L8.80,12.03 L7.97,11.20 L6.76,11.65 L6.13,10.12 L7.30,9.59 L7.30,8.41 L6.13,7.88 L6.76,6.35 L7.97,6.80 L8.80,5.97 L8.35,4.76 L9.88,4.13 L10.41,5.30Z M9.25,9.00 a1.75,1.75 0 1,0 3.50,0 a1.75,1.75 0 1,0 -3.50,0Z" fill="url(#gg6)" fill-rule="evenodd" stroke="#7db02e" stroke-width="0.5" stroke-linejoin="round"/><g fill="none" stroke="#44699b" stroke-linecap="round" stroke-linejoin="round"><path d="M21.3,2.5 L22.6,2.9 L24.3,5.2 L25.0,12.6 H35.6" stroke-width="0.95"/><path d="M23.8,4.2 H36.9 L33.9,9.7 H24.6 Z" fill="#44699b" stroke-width="0.6"/></g><g fill="#ffffff"><rect x="25.15" y="5.20" width="1.1" height="1.15"/><rect x="25.25" y="7.35" width="1.1" height="1.25"/><rect x="27.05" y="5.20" width="1.1" height="1.15"/><rect x="27.15" y="7.35" width="1.1" height="1.25"/><rect x="28.95" y="5.20" width="1.1" height="1.15"/><rect x="29.05" y="7.35" width="1.1" height="1.25"/><rect x="30.85" y="5.20" width="1.1" height="1.15"/><rect x="30.95" y="7.35" width="1.1" height="1.25"/><rect x="32.75" y="5.20" width="1.1" height="1.15"/><rect x="24.90" y="5.30" width="0.5" height="1.2"/><rect x="34.60" y="5.30" width="0.9" height="1.1"/></g><circle cx="25.9" cy="14.3" r="1.0" fill="#3b90e3"/><circle cx="33.8" cy="14.3" r="1.0" fill="#3b90e3"/><circle cx="47" cy="9" r="6.7" fill="url(#ib6)" stroke="#a9c9e6" stroke-width="0.7"/><text x="47" y="12.8" text-anchor="middle" font-family="Liberation Sans, sans-serif" font-weight="bold" font-size="10.2" fill="#2e5c9f" stroke="#2e5c9f" stroke-width="0.45">i</text></svg><!--/ICONS6--><div class="c" style="left:147.0px"><span class="t" style="transform:scaleX(0.98)">6</span></div><div class="c" style="left:183.0px"><span class="t" style="transform:scaleX(0.98)">314080</span></div><div class="c" style="left:270.3px"><span class="t" style="transform:scaleX(0.98)">4</span></div><div class="c" style="left:306.0px"><span class="t" style="transform:scaleX(0.98)">314080</span></div><div class="c" style="left:390.3px;width:131.5px"><span class="t" style="transform:scaleX(0.9)">SCREW</span></div></div>
  <div class="bv" style="left:79px"></div><div class="bv" style="left:144px"></div><div class="bv" style="left:179px"></div>
  <div class="bv" style="left:267px"></div><div class="bv" style="left:302px"></div><div class="bv" style="left:386px"></div>
  <div class="bv" style="left:522px"></div><div class="bv" style="left:574px"></div><div class="bv" style="left:616px"></div>
</div><!--/tbl-->
<!--LOGO-->
<svg class="abs" style="left:688px;top:500px" width="47" height="52" viewBox="1023 520 47 52">
  <g fill="none" stroke="#17609f" stroke-width="2.9">
    <circle cx="1038.95" cy="532.25" r="6.95"/><circle cx="1055.45" cy="532.25" r="6.95"/>
    <circle cx="1038.95" cy="548.75" r="6.95"/><circle cx="1055.45" cy="548.75" r="6.95"/>
  </g>
  <g fill="none" stroke="#17609f" stroke-width="2.3" stroke-linecap="butt">
    <path d="M1033.6,537.6 L1044.3,526.9"/><path d="M1050.1,526.9 L1060.8,537.6"/>
    <path d="M1033.6,543.4 L1044.3,554.1"/><path d="M1050.1,554.1 L1060.8,543.4"/>
  </g>
  <g fill="#17609f" stroke="none">
    <path d="M1047.2,523.6 L1049.5,528.2 L1047.2,529.6 L1044.9,528.2 Z"/>
    <path d="M1047.2,557.4 L1049.5,552.8 L1047.2,551.4 L1044.9,552.8 Z"/>
    <path d="M1030.3,540.5 L1034.9,538.2 L1036.3,540.5 L1034.9,542.8 Z"/>
    <path d="M1064.1,540.5 L1059.5,538.2 L1058.1,540.5 L1059.5,542.8 Z"/>
  </g>
  <text x="1028.1" y="569" font-family="Liberation Sans, sans-serif" font-weight="bold" font-size="10.8" fill="#135a9f" textLength="38.4" lengthAdjust="spacingAndGlyphs">Perkins</text>
  <text x="1066.3" y="564.6" font-family="Liberation Sans, sans-serif" font-size="2.6" fill="#5a8fc4">®</text>
</svg>
<!--/LOGO-->
</div>
</body>
</html>
